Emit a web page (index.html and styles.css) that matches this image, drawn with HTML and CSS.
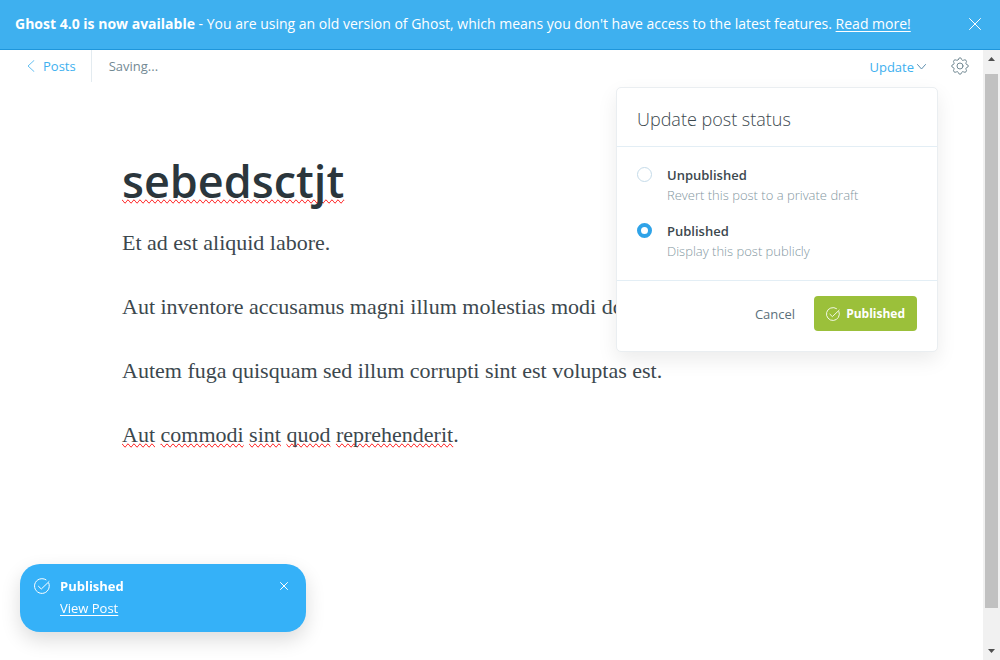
FILE: index.html
```html
<!DOCTYPE html>
<html lang="en">
<head>
<meta charset="utf-8">
<meta name="viewport" content="width=device-width, initial-scale=1">
<title>Ghost editor</title>
<link rel="stylesheet" href="styles.css">
</head>
<body>
<div class="banner">
  <p class="banner-text"><strong>Ghost 4.0 is now available</strong> - You are using an old version of Ghost, which means you don't have access to the latest features. <a href="#">Read more!</a></p>
  <button class="icon-button banner-close" type="button" aria-label="Close banner">
    <svg width="12" height="12" viewBox="0 0 12 12"><path d="M.5.5l11 11M11.5.5l-11 11"/></svg>
  </button>
</div>
<div class="viewport">
  <div class="editor">
    <header class="toolbar">
      <a class="back" href="#"><svg width="8" height="12" viewBox="0 0 8 12"><path d="M7 .5L1 6l6 5.500"/></svg>Posts</a>
      <span class="save-state">Saving...</span>
      <div class="publish">
        <button class="update" type="button">Update<svg width="9" height="6" viewBox="0 0 9 6"><path d="M.5.5l4 4.500 4-4.500"/></svg></button>
        <form class="menu">
          <h2 class="menu-title">Update post status</h2>
          <div class="options">
            <label class="option"><input type="radio" name="status"><span class="option-text"><span class="option-name">Unpublished</span><span class="option-note">Revert this post to a private draft</span></span></label>
            <label class="option"><input type="radio" name="status" checked><span class="option-text"><span class="option-name">Published</span><span class="option-note">Display this post publicly</span></span></label>
          </div>
          <div class="menu-footer">
            <button class="cancel" type="button">Cancel</button>
            <button class="confirm" type="button"><svg width="14" height="14" viewBox="0 0 16 16"><path d="M14.800 5.200A7.400 7.400 0 1 1 12 1.800M4.500 8.300L7.300 11 15 3.600"/></svg>Published</button>
          </div>
        </form>
      </div>
      <button class="icon-button settings" type="button" aria-label="Settings">
        <svg width="18" height="18" viewBox="0 0 18 18"><circle cx="9" cy="9" r="3"/><path d="M7.400 2.400Q7.600.8 9 .8t1.600 1.600q.5 1.600 2.100.8 1.300-.9 2.300.1t.1 2.300q-.9 1.500.8 2 1.400.2 1.400 1.400t-1.400 1.500q-1.700.5-.8 2 .9 1.300-.1 2.300t-2.300.1q-1.600-.9-2.100.8-.2 1.500-1.600 1.500t-1.600-1.500q-.5-1.700-2.100-.8-1.300.9-2.300-.1t-.1-2.300q.9-1.500-.8-2Q.7 10.200.7 9t1.400-1.400q1.700-.5.8-2-.9-1.300.1-2.300t2.300-.1q1.600.8 2.100-.8z"/></svg>
      </button>
    </header>
    <main class="post">
      <h1 class="post-title"><span class="misspelled">sebedsctjt</span></h1>
      <p>Et ad est aliquid labore.</p>
      <p>Aut inventore accusamus magni illum molestias modi doloribus.</p>
      <p>Autem fuga quisquam sed illum corrupti sint est voluptas est.</p>
      <p><span class="misspelled">Aut</span> <span class="misspelled">commodi</span> <span class="misspelled">sint</span> <span class="misspelled">quod</span> <span class="misspelled">reprehenderit</span>.</p>
    </main>
  </div>
  <div class="scrollbar" aria-hidden="true">
    <svg width="7" height="4" viewBox="0 0 7 4"><path d="M0 4L3.500 0 7 4z"/></svg>
    <div class="track"><div class="thumb"></div></div>
    <svg width="7" height="4" viewBox="0 0 7 4"><path d="M0 0l3.500 4L7 0z"/></svg>
  </div>
</div>
<aside class="toast" role="status">
  <svg class="toast-icon" width="16" height="16" viewBox="0 0 16 16"><path d="M14.800 5.200A7.400 7.400 0 1 1 12 1.800M4.500 8.300L7.300 11 15 3.600"/></svg>
  <div class="toast-body"><strong>Published</strong><a href="#">View Post</a></div>
  <button class="icon-button toast-close" type="button" aria-label="Dismiss"><svg width="8" height="8" viewBox="0 0 8 8"><path d="M.5.5l7 7M7.500.5l-7 7"/></svg></button>
</aside>
</body>
</html>
```
FILE: styles.css
```css
* { box-sizing: border-box; }
body {
  margin: 0;
  height: 100vh;
  display: flex;
  flex-direction: column;
  overflow: hidden;
  background: #fff;
  color: #3c484e;
  font: 13px/20px "Open Sans", "Noto Sans", sans-serif;
}
button { border: 0; padding: 0; background: none; font: inherit; color: inherit; cursor: pointer; }
svg { display: block; flex: none; fill: none; stroke: currentColor; stroke-linecap: round; stroke-linejoin: round; }
h1, h2, p { margin: 0; }
.icon-button { display: flex; }

.banner {
  display: flex;
  align-items: center;
  justify-content: space-between;
  min-height: 50px;
  padding: 0 19px 2px 15px;
  background: #3eb0ef;
  border-bottom: 1px solid #1e96db;
  color: #fff;
}
.banner-text { font-size: 14px; }
.banner a, .toast a { color: inherit; text-underline-offset: 2px; }

.viewport { flex: 1; min-height: 0; display: flex; }
.editor { flex: 1; min-width: 0; }

.toolbar { display: flex; align-items: center; height: 32px; padding-right: 14px; }
.back {
  display: flex;
  align-items: center;
  gap: 8px;
  height: 32px;
  padding: 0 15px 0 27px;
  border-right: 1px solid #e3ebf0;
  color: #3eb0ef;
  text-decoration: none;
}
.back svg { stroke-width: .8; }
.save-state { padding-left: 17px; color: #738a94; }
.publish { position: relative; margin-left: auto; margin-right: 25px; }
.update { display: flex; align-items: center; gap: 3px; padding-top: 2px; color: #3eb0ef; }
.update svg { color: #5f8fae; }
.settings { color: #738a94; }

.menu {
  position: absolute;
  top: 32px;
  right: -12px;
  width: 322px;
  background: #fff;
  border: 1px solid #eaeef1;
  border-radius: 5px;
  box-shadow: 0 8px 20px rgba(0, 0, 0, .08);
}
.menu-title { padding: 19px 20px 15px; font-size: 18px; line-height: 24px; font-weight: 300; border-bottom: 1px solid #e3eef5; }
.options { display: grid; gap: 16px; padding: 18px 20px 19px; }
.option { display: flex; gap: 15px; }
.option input {
  appearance: none;
  flex: none;
  width: 15px;
  height: 15px;
  margin: 2px 0 0;
  border: 1px solid #c5dbe9;
  border-radius: 50%;
  background: #fff;
}
.option input:checked { border: 4px solid #2fa3e8; }
.option-text { display: grid; }
.option-name { font-weight: 600; }
.option-note { color: #84979f; font-weight: 300; }
.menu-footer {
  display: flex;
  justify-content: flex-end;
  align-items: center;
  gap: 19px;
  padding: 15px 20px 20px;
  border-top: 1px solid #e3eef5;
}
.cancel { color: #5b707b; }
.confirm {
  display: flex;
  align-items: center;
  gap: 6px;
  height: 35px;
  padding: 0 12px;
  border-radius: 4px;
  background: #9bc03a;
  color: #fff;
  font-size: 12px;
  font-weight: 700;
}

.post { padding: 69px 122px 0; font: 22px/32px "Liberation Serif", serif; }
.post p + p { margin-top: 32px; }
.post-title { margin-bottom: 16px; color: #2b363c; font: 600 45px/60px "Open Sans", "Noto Sans", sans-serif; }
.misspelled { text-decoration: spelling-error; }

.scrollbar { display: flex; flex-direction: column; align-items: center; gap: 13px; width: 17px; padding: 7px 0; background: #f1f1f1; }
.scrollbar svg { fill: #505050; stroke: none; }
.track { flex: 1; width: 13px; }
.thumb { height: 95%; background: #c1c1c1; }

.toast {
  position: fixed;
  left: 20px;
  bottom: 28px;
  display: flex;
  align-items: flex-start;
  gap: 10px;
  width: 286px;
  padding: 12px 18px 14px 14px;
  border-radius: 20px;
  background: #35b1f8;
  box-shadow: 0 8px 20px rgba(0, 0, 0, .14);
  color: #fff;
}
.toast-icon { margin-top: 2px; }
.toast-body { flex: 1; display: grid; justify-items: start; gap: 2px; }
.toast-close { margin-top: 6px; }
```
